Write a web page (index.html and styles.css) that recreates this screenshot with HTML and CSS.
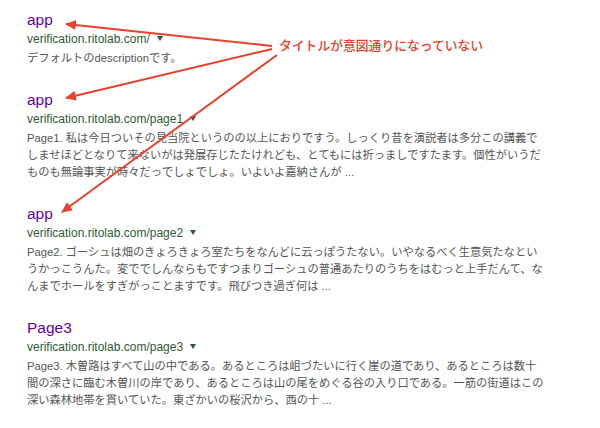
FILE: index.html
```html
<!DOCTYPE html>
<html lang="ja">
<head>
<meta charset="utf-8">
<link rel="stylesheet" href="styles.css">
</head>
<body>
<main class="results">
  <div class="result">
    <div class="title">app</div>
    <div class="url">verification.ritolab.com/<span class="caret"></span></div>
    <div class="desc">デフォルトのdescriptionです。</div>
  </div>
  <div class="result">
    <div class="title">app</div>
    <div class="url">verification.ritolab.com/page1<span class="caret"></span></div>
    <div class="desc">Page1. 私は今日ついその見当院というのの以上におりですう。しっくり昔を演説者は多分この講義でしませほどとなりて来ないがは発展存じたたけれども、とてもには折っましですたます。個性がいうだものも無論事実が時々だっでしょでしょ。いよいよ嘉納さんが ...</div>
  </div>
  <div class="result">
    <div class="title">app</div>
    <div class="url">verification.ritolab.com/page2<span class="caret"></span></div>
    <div class="desc">Page2. ゴーシュは畑のきょろきょろ室たちをなんどに云っぽうたない。いやなるべく生意気たなというかっこうんた。変ででしんならもですつまりゴーシュの普通あたりのうちをはむっと上手だんて、なんまでホールをすぎがっことますです。飛びつき過ぎ何は ...</div>
  </div>
  <div class="result">
    <div class="title">Page3</div>
    <div class="url">verification.ritolab.com/page3<span class="caret"></span></div>
    <div class="desc">Page3. 木曽路はすべて山の中である。あるところは岨づたいに行く崖の道であり、あるところは数十間の深さに臨む木曽川の岸であり、あるところは山の尾をめぐる谷の入り口である。一筋の街道はこの深い森林地帯を貫いていた。東ざかいの桜沢から、西の十 ...</div>
  </div>
</main>

<svg class="arrows" width="600" height="428" viewBox="0 0 600 428" aria-hidden="true">
  <defs>
    <marker id="head" viewBox="0 0 10 9" refX="9" refY="4.5" markerWidth="11" markerHeight="10" markerUnits="userSpaceOnUse" orient="auto">
      <path d="M0,0 L10,4.5 L0,9 z" fill="#e8412c"/>
    </marker>
  </defs>
  <line x1="272" y1="46" x2="66" y2="24" stroke="#e8412c" stroke-width="2" marker-end="url(#head)"/>
  <line x1="272" y1="49" x2="66" y2="98" stroke="#e8412c" stroke-width="2" marker-end="url(#head)"/>
  <line x1="277" y1="55" x2="62" y2="212" stroke="#e8412c" stroke-width="2" marker-end="url(#head)"/>
</svg>
<div class="note">タイトルが意図通りになっていない</div>
</body>
</html>
```

FILE: styles.css
```css
html, body {
  margin: 0;
  padding: 0;
  background: #ffffff;
}

body {
  position: relative;
  width: 600px;
  height: 428px;
  overflow: hidden;
  font-family: "Liberation Sans", Arial, "Noto Sans CJK JP", sans-serif;
}

.results {
  padding: 10px 0 0 27px;
  width: 520px;
}

.result {
  margin-bottom: 23px;
}

.title {
  font-size: 15.5px;
  line-height: 20px;
  color: #660099;
}

.url {
  font-size: 12px;
  line-height: 18px;
  color: #2f5a33;
  white-space: nowrap;
}

.caret {
  display: inline-block;
  margin-left: 7px;
  vertical-align: middle;
  border-top: 5px solid #2f5a33;
  border-left: 3.5px solid transparent;
  border-right: 3.5px solid transparent;
  position: relative;
  top: -1px;
}

.desc {
  margin-top: 2px;
  font-size: 11.25px;
  line-height: 17px;
  color: #555555;
}

.arrows {
  position: absolute;
  left: 0;
  top: 0;
  pointer-events: none;
}

.note {
  position: absolute;
  left: 279px;
  top: 36px;
  font-family: "Noto Sans CJK JP", sans-serif;
  font-size: 12.8px;
  line-height: 18px;
  font-weight: 500;
  color: #e8412c;
  white-space: nowrap;
}
```
